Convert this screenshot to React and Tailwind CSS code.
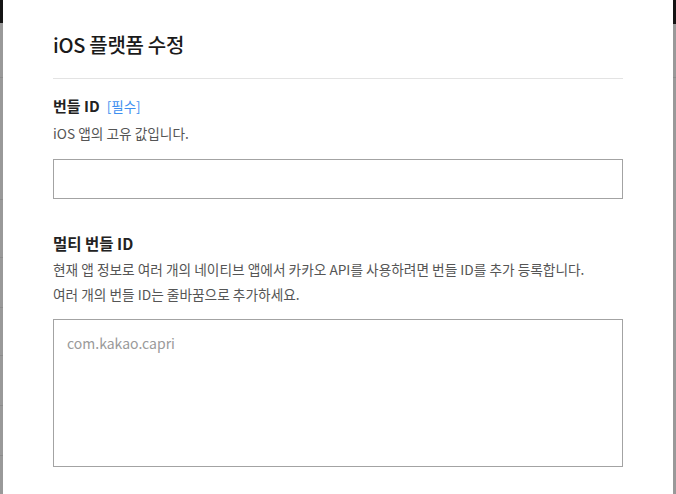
export default function App() {
  const font = { fontFamily: '"Noto Sans CJK KR", "Noto Sans", sans-serif' };
  const leftLines = [77, 199, 257, 307, 355, 405, 455];
  return (
    <div className="flex h-[494px] w-[676px] overflow-hidden bg-white" style={font}>
      {/* left backdrop strip */}
      <div className="relative flex w-[3px] shrink-0 flex-col bg-[#999999]">
        <div className="h-[23px] bg-[#141414]" />
        {leftLines.map((y) => (
          <div key={y} className="absolute left-0 h-px w-full bg-[#8c8c8c]" style={{ top: y }} />
        ))}
      </div>

      {/* modal */}
      <div className="flex min-w-0 flex-1 flex-col px-[50px] pt-[31px]">
        <h1 className="text-[20px] font-medium leading-[28px] tracking-[-0.3px] text-[#1a1a1a]">
          iOS 플랫폼 수정
        </h1>
        <div className="mt-[19px] h-px bg-[#e3e3e3]" />

        <div className="mt-[16px] flex items-baseline gap-[7px]">
          <span className="text-[15px] font-bold leading-[22px] text-[#222]">번들 ID</span>
          <span className="text-[13.5px] leading-[22px] text-[#3d8ff0]">[필수]</span>
        </div>
        <p className="mt-[6px] text-[13.7px] leading-[20px] text-[#555]">iOS 앱의 고유 값입니다.</p>
        <input
          type="text"
          className="mt-[16px] h-[40px] w-full border border-[#a3a3a3] bg-white px-[13px] text-[14px] outline-none"
        />

        <div className="mt-[33px] text-[15.5px] font-bold leading-[22px] text-[#222]">멀티 번들 ID</div>
        <p className="mt-[3px] text-[13.7px] leading-[25px] text-[#555]">
          현재 앱 정보로 여러 개의 네이티브 앱에서 카카오 API를 사용하려면 번들 ID를 추가 등록합니다.
          <br />
          여러 개의 번들 ID는 줄바꿈으로 추가하세요.
        </p>
        <textarea
          placeholder="com.kakao.capri"
          className="mt-[12px] h-[148px] w-full resize-none border border-[#a3a3a3] bg-white px-[13px] pt-[12px] text-[14px] leading-[22px] text-[#333] outline-none placeholder:text-[#9a9a9a]"
        />
      </div>

      {/* right backdrop strip */}
      <div className="relative flex w-[3px] shrink-0 flex-col bg-[#999999]">
        <div className="h-[24px] bg-[#141414]" />
        <div className="absolute left-0 top-[77px] h-px w-full bg-[#8c8c8c]" />
      </div>
    </div>
  );
}
